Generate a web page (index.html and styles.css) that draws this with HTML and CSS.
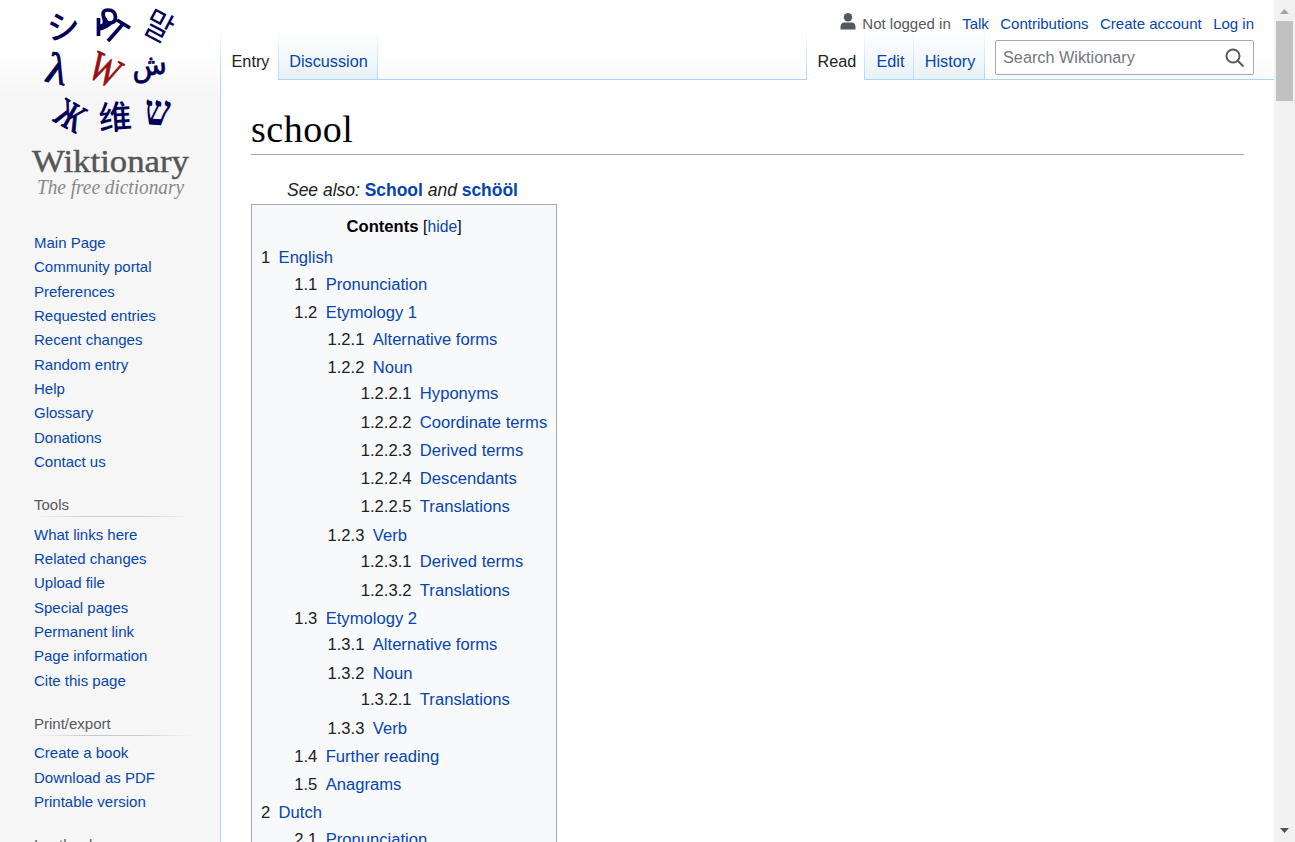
FILE: index.html
```
<!DOCTYPE html>
<html lang="en">
<head>
<meta charset="utf-8">
<title>school - Wiktionary</title>
<link rel="stylesheet" href="styles.css">
</head>
<body>
<div class="page">
  <aside class="sidebar">
    <svg class="logo" width="220" height="210" viewBox="0 0 220 210">
      <g fill="#000057" text-anchor="middle">
        <text class="cjk medium" font-size="33" transform="translate(64 39) rotate(-3)">シ</text>
        <g fill="none" stroke="#000057" stroke-width="3.7">
          <path d="M98.500 18V36M97 26H101Q106 26 104 18Q101 10 108 10Q115 10 115.500 17Q115.500 23 109.500 23Q106 23 105 18M99 29C105 28 109 25 112 22M108 41L123 24M117 20L130 28"/>
        </g>
        <text class="kr" font-size="34" transform="translate(153 37) rotate(28) scale(.88 1)">말</text>
        <text class="serif" font-size="43" stroke="#000057" stroke-width="1" transform="translate(54 83) rotate(13)">λ</text>
        <text class="serif" font-size="42" fill="#9a1010" stroke="#9a1010" stroke-width="1" transform="translate(99 82) rotate(27) scale(.76 1)">W</text>
        <text class="dejavu" font-size="29" stroke="#000057" stroke-width=".7" transform="translate(150 75) rotate(-7)">ش</text>
        <text class="serif" font-size="40" stroke="#000057" stroke-width="1" transform="translate(64 127) rotate(29) scale(.75 1)">Ж</text>
        <text class="cjk medium" font-size="33" transform="translate(116 129) rotate(-4)">维</text>
        <text class="serif bold" font-size="43" transform="translate(157 125) rotate(3) scale(.85 1)">ש</text>
      </g>
      <text class="serif" x="32" y="172" font-size="32" fill="#555" stroke="#555" stroke-width=".4" textLength="157" lengthAdjust="spacingAndGlyphs">Wiktionary</text>
      <text class="serif italic" x="37" y="194" font-size="21" fill="#888" textLength="147" lengthAdjust="spacingAndGlyphs">The free dictionary</text>
    </svg>
    <nav class="portal first">
      <ul><li><a>Main Page</a></li><li><a>Community portal</a></li><li><a>Preferences</a></li><li><a>Requested entries</a></li><li><a>Recent changes</a></li><li><a>Random entry</a></li><li><a>Help</a></li><li><a>Glossary</a></li><li><a>Donations</a></li><li><a>Contact us</a></li></ul>
    </nav>
    <nav class="portal">
      <h3>Tools</h3>
      <ul><li><a>What links here</a></li><li><a>Related changes</a></li><li><a>Upload file</a></li><li><a>Special pages</a></li><li><a>Permanent link</a></li><li><a>Page information</a></li><li><a>Cite this page</a></li></ul>
    </nav>
    <nav class="portal">
      <h3>Print/export</h3>
      <ul><li><a>Create a book</a></li><li><a>Download as PDF</a></li><li><a>Printable version</a></li></ul>
    </nav>
    <nav class="portal">
      <h3>In other languages</h3>
    </nav>
  </aside>
  <main class="main">
    <header class="head">
      <div class="personal">
        <span class="user"><svg width="16" height="17" viewBox="0 0 16 17" fill="#54595d"><circle cx="8" cy="4.300" r="4.200"/><path d="M.5 16.500V14Q.5 9.500 4.500 9.500H11.500Q15.500 9.500 15.500 14V16.500Z"/></svg>Not logged in</span>
        <a>Talk</a><a>Contributions</a><a>Create account</a><a>Log in</a>
      </div>
      <div class="bar">
        <div class="tabs left"><a class="tab selected entry">Entry</a><a class="tab discussion">Discussion</a></div>
        <div class="tabs right"><a class="tab selected read">Read</a><a class="tab edit">Edit</a><a class="tab history">History</a></div>
        <div class="search"><span>Search Wiktionary</span>
          <svg width="20" height="20" viewBox="0 0 20 20" fill="none" stroke="#54595d" stroke-width="2"><circle cx="8" cy="8" r="6.500"/><path d="M12.500 12.500L18.500 18.500"/></svg>
        </div>
      </div>
    </header>
    <article class="content">
      <h1>school</h1>
      <p class="also">See also: <a>School</a> and <a>schööl</a></p>
      <div class="toc">
        <div class="toctitle"><b>Contents</b> <span>[<a>hide</a>]</span></div>
        <ul>
          <li><a><i>1</i>English</a>
            <ul>
              <li><a><i>1.1</i>Pronunciation</a></li>
              <li><a><i>1.2</i>Etymology 1</a>
                <ul>
                  <li><a><i>1.2.1</i>Alternative forms</a></li>
                  <li><a><i>1.2.2</i>Noun</a>
                    <ul>
                      <li><a><i>1.2.2.1</i>Hyponyms</a></li>
                      <li><a><i>1.2.2.2</i>Coordinate terms</a></li>
                      <li><a><i>1.2.2.3</i>Derived terms</a></li>
                      <li><a><i>1.2.2.4</i>Descendants</a></li>
                      <li><a><i>1.2.2.5</i>Translations</a></li>
                    </ul>
                  </li>
                  <li><a><i>1.2.3</i>Verb</a>
                    <ul>
                      <li><a><i>1.2.3.1</i>Derived terms</a></li>
                      <li><a><i>1.2.3.2</i>Translations</a></li>
                    </ul>
                  </li>
                </ul>
              </li>
              <li><a><i>1.3</i>Etymology 2</a>
                <ul>
                  <li><a><i>1.3.1</i>Alternative forms</a></li>
                  <li><a><i>1.3.2</i>Noun</a>
                    <ul><li><a><i>1.3.2.1</i>Translations</a></li></ul>
                  </li>
                  <li><a><i>1.3.3</i>Verb</a></li>
                </ul>
              </li>
              <li><a><i>1.4</i>Further reading</a></li>
              <li><a><i>1.5</i>Anagrams</a></li>
            </ul>
          </li>
          <li><a><i>2</i>Dutch</a>
            <ul>
              <li><a><i>2.1</i>Pronunciation</a></li>
              <li><a><i>2.2</i>Noun</a></li>
            </ul>
          </li>
        </ul>
      </div>
    </article>
  </main>
  <div class="scrollbar">
    <svg width="9" height="5" viewBox="0 0 9 5"><path d="M0 5L4.500 0L9 5Z" fill="#a3a3a3"/></svg>
    <div class="thumb"></div>
    <svg width="9" height="5" viewBox="0 0 9 5"><path d="M0 0H9L4.500 5Z" fill="#505050"/></svg>
  </div>
</div>
</body>
</html>
```
FILE: styles.css
```
* { box-sizing: border-box; }
body { margin: 0; overflow: hidden; font-family: "Liberation Sans", Arial, sans-serif; color: #202122; }
a { color: #0645ad; }
ul { list-style: none; margin: 0; padding: 0; }
.page {
  display: grid;
  grid-template-columns: 220px 1fr 21px;
  height: 842px;
  overflow: hidden;
  background: linear-gradient(#fff 50px, #f6f6f6 100px) 0 0 / 100% 100px no-repeat #f6f6f6;
}
.sidebar, .main { min-width: 0; height: 842px; overflow: hidden; }
.logo { display: block; }
.serif { font-family: "Liberation Serif", serif; }
.dejavu { font-family: "DejaVu Sans", sans-serif; }
.cjk { font-family: "Noto Sans CJK SC", sans-serif; }
.kr { font-family: "Noto Sans CJK KR", sans-serif; font-weight: 400; }
.bold { font-weight: 700; }
.medium { font-weight: 500; }
.italic { font-style: italic; }

.portal { padding: 0 0 0 34px; margin-bottom: 18px; font-size: 15px; }
.portal.first { padding-top: 21px; }
.portal li { padding: 3.75px 0; line-height: 16.875px; }
.portal h3 {
  margin: 0 28px 5.600px 0;
  height: 24.500px;
  padding-top: 3.300px;
  font-size: 15px;
  font-weight: 400;
  line-height: 18px;
  color: #54595d;
  background: linear-gradient(to right, rgba(200,204,209,0), #c8ccd1 33%, #c8ccd1 66%, rgba(200,204,209,0)) 0 100% / 100% 1px no-repeat;
}

.main { display: flex; flex-direction: column; }
.head { height: 80px; flex: none; display: flex; flex-direction: column; }
.personal { position: relative; z-index: 1; display: flex; justify-content: flex-end; gap: 11.400px; height: 30px; padding: 15px 20px 0 0; font-size: 15px; line-height: 18px; }
.user { display: flex; color: #54595d; }
.user svg { margin: -2px 6px 0 0; }
.bar {
  display: flex;
  height: 50px;
  background: linear-gradient(#a7d7f9, #a7d7f9) 0 100% / 100% 1px no-repeat;
}
.tabs { display: flex; height: 50px; }
.left { margin-right: auto; }
.tab {
  height: 49px;
  padding-top: 21px;
  padding-left: 1px;
  text-align: center;
  font-size: 16.250px;
  line-height: 20px;
  border-right: 1px solid;
  border-image: linear-gradient(#fff, #a7d7f9) 1;
  background: linear-gradient(#fff, #e8f2f8);
}
.tab.selected { height: 50px; background: linear-gradient(#fff, #fff); color: #202122; }
.entry { width: 59px; padding-left: 2px; border-left: 1px solid; }
.discussion { width: 99px; }
.read { width: 59px; padding-left: 3px; border-left: 1px solid; }
.edit { width: 49px; padding-left: 3px; }
.history { width: 71px; padding-left: 2px; }
.search {
  display: flex;
  justify-content: space-between;
  align-items: center;
  width: 259px;
  height: 35px;
  margin: 10px 20px 0 10px;
  padding: 0 8px 0 7px;
  border: 1px solid #a2a9b1;
  border-radius: 2px;
  background: #fff;
  color: #72777d;
  font-size: 16.250px;
}

.content { flex: 1; min-height: 0; padding: 25px 30px 0; border-left: 1px solid #a7d7f9; background: #fff; }
h1 {
  margin: 0;
  height: 50px;
  border-bottom: 1px solid #a2a9b1;
  font: 400 38px/48px "Liberation Serif", serif;
  letter-spacing: .5px;
  color: #000;
}
.also { margin: 20px 0 0; padding-left: 36px; height: 29px; font-size: 17.500px; line-height: 30px; font-style: italic; letter-spacing: -.02px; }
.also a { font-style: normal; font-weight: 700; }
.toc { width: 306px; height: 700px; padding: 8.750px 9px; border: 1px solid #a2a9b1; background: #f8f9fa; font-size: 16.625px; line-height: 26.600px; }
.toctitle { text-align: center; color: #000; }
.toctitle span { font-size: 15.700px; }
.toc > ul { margin-top: 4.850px; }
.toc ul ul { margin-left: 33.250px; }
.toc li { margin-bottom: 1.660px; }
.toc li > a { display: flex; white-space: nowrap; }
.toc i { font-style: normal; color: #202122; padding-right: 8.310px; }

.scrollbar { display: flex; flex-direction: column; align-items: center; height: 842px; padding: 9px 0; background: #f1f1f1; }
.thumb { width: 17px; height: 80px; margin: 7px 0 auto; background: #c1c1c1; }
```
